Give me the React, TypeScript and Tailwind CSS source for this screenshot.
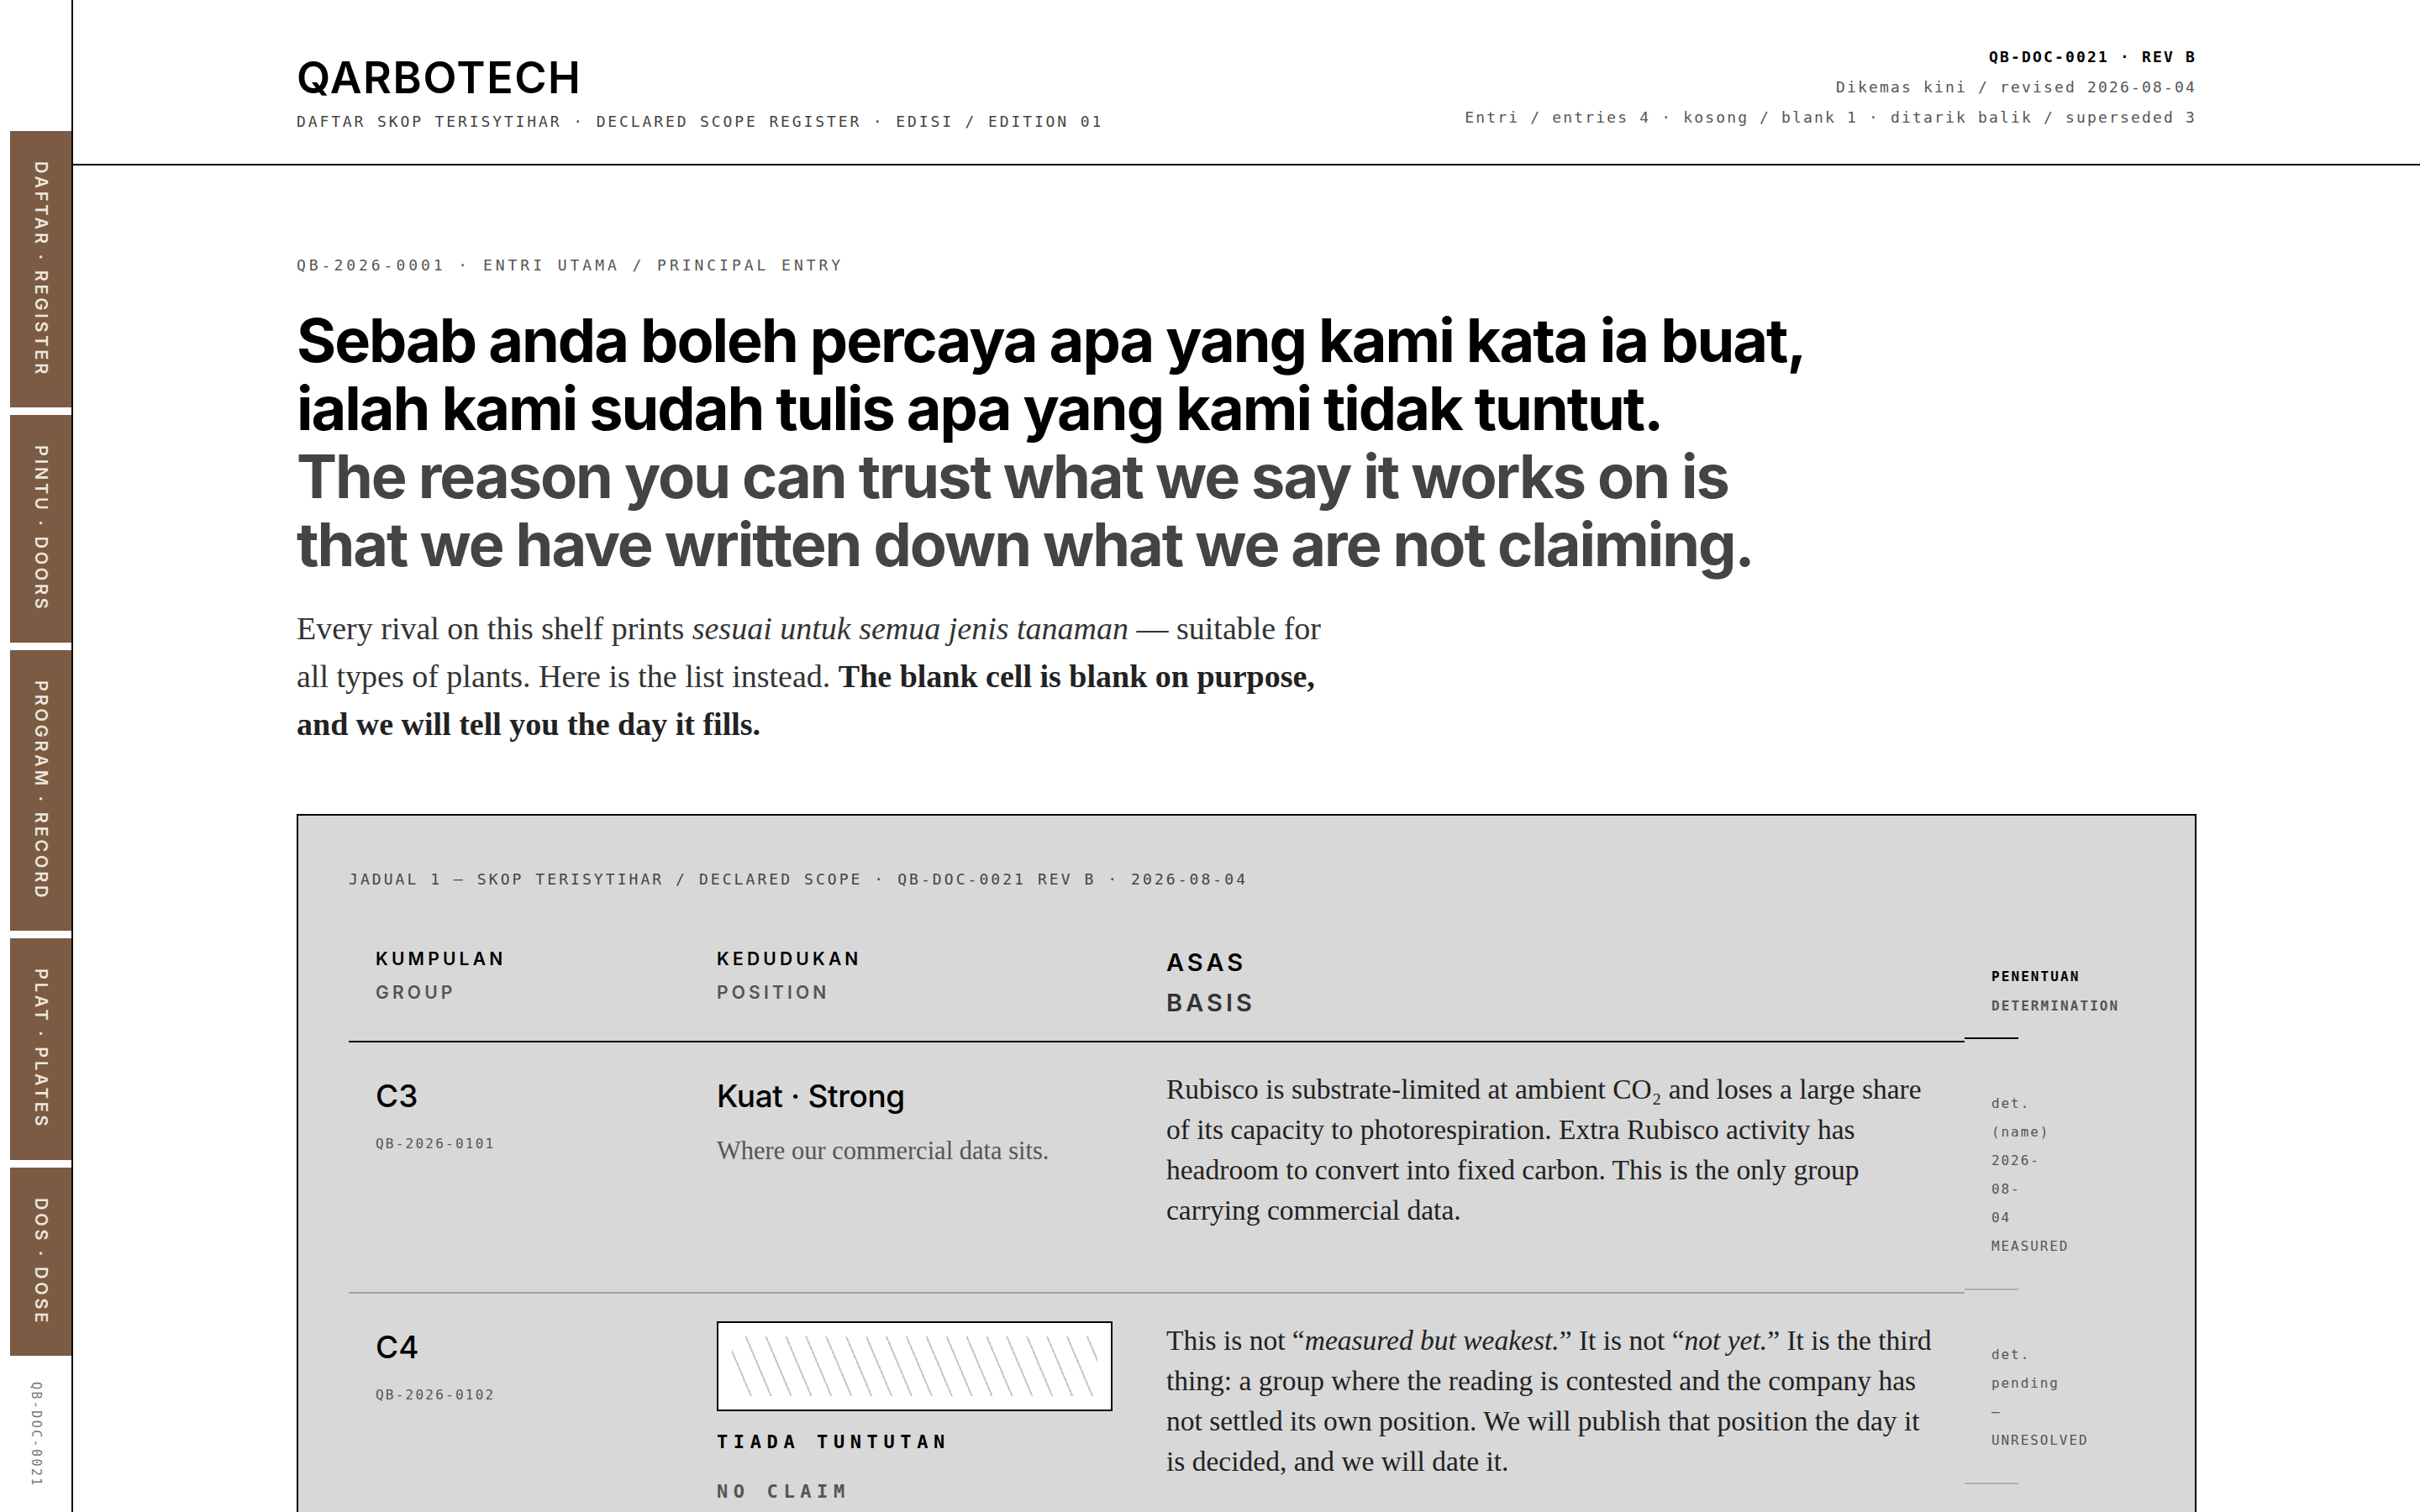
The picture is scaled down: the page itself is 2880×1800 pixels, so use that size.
import React from "react";

const SANS = "[font-family:Inter,'Liberation_Sans',sans-serif]";
const SERIF = "[font-family:'Liberation_Serif',serif]";
const MONO = "[font-family:'DejaVu_Sans_Mono',monospace]";

const tabs = [
  "DAFTAR · REGISTER",
  "PINTU · DOORS",
  "PROGRAM · RECORD",
  "PLAT · PLATES",
  "DOS · DOSE",
];

function SideRail() {
  return (
    <aside className="w-[87px] shrink-0 border-r-2 border-black flex flex-col items-end pt-[156px]">
      <nav className="flex flex-col gap-[9px]">
        {tabs.map((t) => (
          <a
            key={t}
            href="#"
            className={`w-[73px] bg-[#7b5b43] text-[#efe6dc] py-[36px] flex justify-center ${SANS}`}
          >
            <span className="[writing-mode:vertical-rl] text-[20px] leading-none font-semibold tracking-[0.19em]">
              {t}
            </span>
          </a>
        ))}
      </nav>
      <span
        className={`self-center mt-[31px] [writing-mode:vertical-rl] text-[15px] leading-none tracking-[0.16em] text-[#777] ${MONO}`}
      >
        QB-DOC-0021
      </span>
    </aside>
  );
}

export default function App() {
  return (
    <div className="flex min-h-screen bg-white text-black">
      <SideRail />
      <main className="flex-1 min-w-0">
        {/* masthead */}
        <header className="border-b-2 border-black">
          <div className="mx-auto max-w-[2261px] flex items-end justify-between pt-[50px] pb-[37px]">
            <div>
              <h1 className={`text-[52px] leading-none font-semibold tracking-[0.03em] ${SANS}`}>QARBOTECH</h1>
              <p className={`mt-3 text-[18px] leading-[27px] tracking-[0.16em] text-[#444] ${MONO}`}>
                DAFTAR SKOP TERISYTIHAR · DECLARED SCOPE REGISTER · EDISI / EDITION 01
              </p>
            </div>
            <div className={`text-right text-[18px] leading-[36px] tracking-[0.12em] text-[#555] ${MONO}`}>
              <p className="font-bold text-black">QB-DOC-0021 · REV B</p>
              <p>Dikemas kini / revised 2026-08-04</p>
              <p>Entri / entries 4 · kosong / blank 1 · ditarik balik / superseded 3</p>
            </div>
          </div>
        </header>

        <section className="mx-auto max-w-[2261px] pt-[105px] pb-[120px]">
          <p className={`text-[18px] leading-[27px] tracking-[0.22em] text-[#555] ${MONO}`}>
            QB-2026-0001 · ENTRI UTAMA / PRINCIPAL ENTRY
          </p>
          <h2 className={`mt-[35px] max-w-[1810px] text-[72px] leading-[81px] font-bold tracking-[-0.028em] ${SANS}`}>
            <span className="block text-black">
              Sebab anda boleh percaya apa yang kami kata ia buat, ialah kami sudah tulis apa yang kami tidak tuntut.
            </span>
            <span className="block text-[#444]">
              The reason you can trust what we say it works on is that we have written down what we are not claiming.
            </span>
          </h2>
          <p className={`mt-8 max-w-[1240px] text-[38px] leading-[57px] text-[#333] ${SERIF}`}>
            Every rival on this shelf prints <em>sesuai untuk semua jenis tanaman</em> — suitable for all types of
            plants. Here is the list instead.{" "}
            <strong className="text-[#222]">The blank cell is blank on purpose, and we will tell you the day it fills.</strong>
          </p>

          {/* table 1 */}
          <div className="mt-[78px] border-2 border-black bg-[#d8d8d8] px-[60px] pt-[62px] pb-[80px]">
            <p className={`text-[18px] leading-[27px] tracking-[0.17em] text-[#444] ${MONO}`}>
              JADUAL 1 — SKOP TERISYTIHAR / DECLARED SCOPE · QB-DOC-0021 REV B · 2026-08-04
            </p>

            <div className="mt-[30px] grid grid-cols-[406px_535px_982px_64px]">
              {/* head */}
              <div className={`border-b-2 border-black px-8 pt-8 pb-[37px] text-[21px] leading-[40px] font-semibold tracking-[0.2em] ${SANS}`}>
                <div>KUMPULAN</div>
                <div className="text-[#555]">GROUP</div>
              </div>
              <div className={`border-b-2 border-black px-8 pt-8 pb-[37px] text-[21px] leading-[40px] font-semibold tracking-[0.2em] ${SANS}`}>
                <div>KEDUDUKAN</div>
                <div className="text-[#555]">POSITION</div>
              </div>
              <div className={`border-b-2 border-black px-8 pt-8 text-[29px] leading-[48px] font-semibold tracking-[0.14em] ${SANS}`}>
                <div>ASAS</div>
                <div className="text-[#333]">BASIS</div>
              </div>
              <div className={`-translate-y-1 border-b-2 border-black px-8 pb-5 flex flex-col justify-end text-[16px] leading-[35px] font-bold tracking-[0.13em] ${MONO}`}>
                <div>PENENTUAN</div>
                <div className="text-[#555]">DETERMINATION</div>
              </div>

              {/* C3 */}
              <div className="border-b-2 border-[#a3a3a3] px-8 pt-[42px]">
                <div className={`text-[37px] leading-[44px] font-medium ${SANS}`}>C3</div>
                <div className={`mt-[23px] text-[16px] leading-[24px] tracking-[0.14em] text-[#555] ${MONO}`}>QB-2026-0101</div>
              </div>
              <div className="border-b-2 border-[#a3a3a3] px-8 pt-[42px]">
                <div className={`text-[37px] leading-[44px] font-medium tracking-[-0.01em] ${SANS}`}>Kuat · Strong</div>
                <p className={`mt-[22px] text-[30.5px] leading-[42px] text-[#555] ${SERIF}`}>Where our commercial data sits.</p>
              </div>
              <div className={`border-b-2 border-[#a3a3a3] px-8 pt-8 text-[33.5px] leading-[48px] text-[#222] ${SERIF}`}>
                Rubisco is substrate-limited at ambient CO₂ and loses a large share of its capacity to photorespiration.
                Extra Rubisco activity has headroom to convert into fixed carbon. This is the only group carrying
                commercial data.
              </div>
              <div className={`self-start -translate-y-1 border-b-2 border-[#b0b0b0] px-8 pt-[60px] pb-[33px] text-[16px] leading-[34px] tracking-[0.12em] text-[#555] ${MONO}`}>
                det. (name) 2026-08-04 MEASURED
              </div>

              {/* C4 */}
              <div className="border-b-2 border-[#a3a3a3] px-8 pt-[42px]">
                <div className={`text-[37px] leading-[44px] font-medium ${SANS}`}>C4</div>
                <div className={`mt-[23px] text-[16px] leading-[24px] tracking-[0.14em] text-[#555] ${MONO}`}>QB-2026-0102</div>
              </div>
              <div className="border-b-2 border-[#a3a3a3] px-8 pt-[33px] pb-10">
                <div className="h-[107px] border-2 border-black bg-white p-4">
                  <div className="h-full bg-[repeating-linear-gradient(67deg,transparent_0_20px,#c8c8c8_20px_22px)]" />
                </div>
                <div className={`mt-5 text-[22px] leading-[33px] font-bold tracking-[0.3em] ${MONO}`}>TIADA TUNTUTAN</div>
                <div className={`mt-[26px] text-[22px] leading-[33px] font-bold tracking-[0.3em] text-[#555] ${MONO}`}>NO CLAIM</div>
              </div>
              <div className={`border-b-2 border-[#a3a3a3] px-8 pt-8 text-[33.5px] leading-[48px] text-[#222] ${SERIF}`}>
                This is not “<em>measured but weakest.</em>” It is not “<em>not yet.</em>” It is the third thing: a group
                where the reading is contested and the company has not settled its own position. We will publish that
                position the day it is decided, and we will date it.
              </div>
              <div className={`self-start -translate-y-1 border-b-2 border-[#b0b0b0] px-8 pt-[60px] pb-[33px] text-[16px] leading-[34px] tracking-[0.12em] text-[#555] ${MONO}`}>
                det. pending — UNRESOLVED
              </div>
            </div>
          </div>
        </section>
      </main>
    </div>
  );
}
